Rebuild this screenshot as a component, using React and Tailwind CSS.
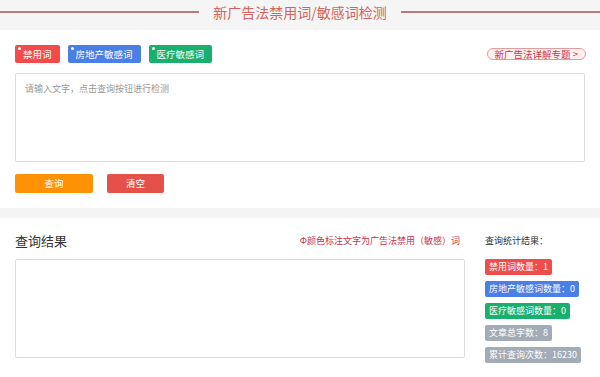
export default function App() {
  const tags = [
    { t: "禁用词", c: "bg-[#f34a4a]" },
    { t: "房地产敏感词", c: "bg-[#4a7fe6]" },
    { t: "医疗敏感词", c: "bg-[#19b06d]" },
  ];
  const stats = [
    { t: "禁用词数量：1", c: "bg-[#f04c4c]" },
    { t: "房地产敏感词数量：0", c: "bg-[#4a7fe6]" },
    { t: "医疗敏感词数量：0", c: "bg-[#19b06d]" },
    { t: "文章总字数：8", c: "bg-[#a2abb6]" },
    { t: "累计查询次数：16230", c: "bg-[#a2abb6]" },
  ];
  return (
    <div
      className="w-[600px] h-[377px] overflow-hidden bg-white text-[#333]"
      style={{ fontFamily: '"Noto Sans CJK SC", "Noto Sans", sans-serif' }}
    >
      <div className="h-[30px] bg-[#f5f5f5]">
        <div className="h-[24px] flex items-center">
          <div className="flex-1 h-[2px] bg-[#be7c78]" />
          <div className="px-[14px] text-[14px] leading-[24px] text-[#d6625f]">
            新广告法禁用词/敏感词检测
          </div>
          <div className="flex-1 h-[2px] bg-[#be7c78]" />
        </div>
      </div>

      <div className="px-[15px] pt-[15px] pb-[15px]">
        <div className="flex items-center justify-between h-[18px]">
          <div className="flex gap-[8px]">
            {tags.map((g) => (
              <div
                key={g.t}
                className={`relative h-[18px] px-[8px] rounded-[2px] text-white text-[9.5px] leading-[18px] ${g.c}`}
              >
                <span className="absolute left-[3px] top-[2px] w-[3px] h-[3px] rounded-full bg-white" />
                {g.t}
              </div>
            ))}
          </div>
          <div className="mr-[-1px] h-[12px] px-[7px] rounded-full border border-[#e39a9a] bg-[#fdf0f0] text-[#cf3446] text-[9.5px] leading-[10px] flex items-center whitespace-nowrap">
            新广告法详解专题 &gt;
          </div>
        </div>

        <div className="mt-[10px] h-[89px] border border-[#dcdcdc] rounded-[2px] px-[9px] pt-[8px] text-[9px] leading-[14px] text-[#999]">
          请输入文字，点击查询按钮进行检测
        </div>

        <div className="mt-[12px] flex gap-[14px]">
          <div className="w-[78px] h-[19px] rounded-[2px] bg-[#ff9204] text-white text-[9.5px] leading-[19px] text-center">
            查询
          </div>
          <div className="w-[57px] h-[19px] rounded-[2px] bg-[#e5514a] text-white text-[9.5px] leading-[19px] text-center">
            清空
          </div>
        </div>
      </div>

      <div className="h-[10px] bg-[#f4f4f4]" />

      <div className="px-[15px] pt-[14px] flex gap-[20px]">
        <div className="w-[450px]">
          <div className="h-[18px] flex items-center justify-between pr-[5px]">
            <div className="text-[13px] leading-[18px] text-[#333]">查询结果</div>
            <div className="text-[9px] leading-[18px] text-[#c9304a]">
              Φ颜色标注文字为广告法禁用（敏感）词
            </div>
          </div>
          <div className="mt-[9px] h-[99px] border border-[#dcdcdc] rounded-[2px]" />
        </div>
        <div className="flex flex-col">
          <div className="h-[18px] text-[9px] leading-[18px] text-[#333]">查询统计结果：</div>
          <div className="mt-[9px] flex flex-col items-start gap-[6px]">
            {stats.map((s) => (
              <div
                key={s.t}
                className={`h-[16px] px-[4px] rounded-[2px] text-white text-[9px] leading-[16px] whitespace-nowrap ${s.c}`}
              >
                {s.t}
              </div>
            ))}
          </div>
        </div>
      </div>
    </div>
  );
}
